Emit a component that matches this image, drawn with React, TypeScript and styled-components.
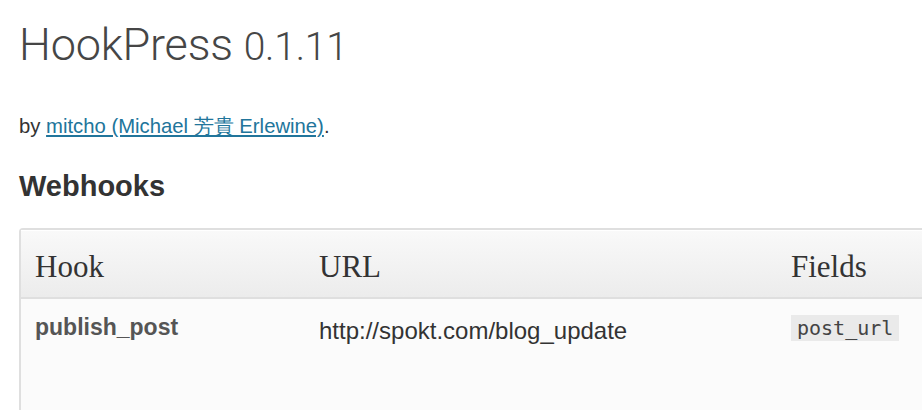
import React from "react";
import styled, { createGlobalStyle } from "styled-components";

const Global = createGlobalStyle`
  html, body { margin: 0; padding: 0; background: #ffffff; }
  body { font-family: "Liberation Sans", Arial, sans-serif; color: #333; }
`;

const Page = styled.div`
  padding: 15px 0 0 19px;
  overflow: hidden;
  height: 410px;
  box-sizing: border-box;
`;

const Title = styled.h2`
  margin: 0;
  font-family: Roboto, "Liberation Sans", sans-serif;
  font-weight: 300;
  font-size: 45px;
  line-height: 60px;
  color: #464646;
  letter-spacing: -0.2px;
`;

const Version = styled.span`
  font-size: 39px;
`;

const Byline = styled.p`
  margin: 36px 0 0 0;
  font-size: 20.3px;
  line-height: 26px;
  color: #333;
`;

const AuthorLink = styled.a`
  color: #21759b;
  text-decoration: underline;
  text-underline-offset: 2px;
`;

const SectionTitle = styled.h3`
  margin: 30px 0 0 0;
  font-size: 29px;
  line-height: 34px;
  font-weight: bold;
  color: #333;
`;

const Table = styled.table`
  margin-top: 25px;
  width: 1000px;
  border-collapse: separate;
  border-spacing: 0;
  border: 2px solid #dfdfdf;
  border-right: none;
  border-bottom: none;
  border-radius: 4px 0 0 0;
  background: #fbfbfb;
`;

const HeadCell = styled.th<{ $w?: number }>`
  text-align: left;
  font-family: "Liberation Serif", Georgia, serif;
  font-weight: normal;
  font-size: 31px;
  color: #333;
  height: 69px;
  padding: 6px 14px 0 14px;
  vertical-align: middle;
  background: linear-gradient(to bottom, #f9f9f9, #ececec);
  border-bottom: 2px solid #dfdfdf;
  width: ${(p) => (p.$w ? `${p.$w}px` : "auto")};
  box-sizing: border-box;
  border-top: 1px solid #ffffff;
`;

const Cell = styled.td<{ $bold?: boolean; $offset?: number }>`
  vertical-align: top;
  padding: ${(p) => 14 + (p.$offset ?? 0)}px 14px 0 14px;
  height: 130px;
  box-sizing: border-box;
  font-size: ${(p) => (p.$bold ? 23 : 24)}px;
  line-height: 28px;
  font-weight: ${(p) => (p.$bold ? "bold" : "normal")};
  color: ${(p) => (p.$bold ? "#555" : "#333")};
`;

const Code = styled.code`
  display: inline-block;
  font-family: "DejaVu Sans Mono", "Liberation Mono", monospace;
  font-size: 20px;
  line-height: 26px;
  padding: 0 6px;
  background: #eaeaea;
  color: #444;
`;

export default function App() {
  return (
    <>
      <Global />
      <Page>
        <Title>
          HookPress <Version>0.1.11</Version>
        </Title>
        <Byline>
          by <AuthorLink href="#">mitcho (Michael 芳貴 Erlewine)</AuthorLink>.
        </Byline>
        <SectionTitle>Webhooks</SectionTitle>
        <Table>
          <thead>
            <tr>
              <HeadCell $w={284}>Hook</HeadCell>
              <HeadCell $w={472}>URL</HeadCell>
              <HeadCell>Fields</HeadCell>
            </tr>
          </thead>
          <tbody>
            <tr>
              <Cell $bold>publish_post</Cell>
              <Cell $offset={4}>http://spokt.com/blog_update</Cell>
              <Cell>
                <Code>post_url</Code>
              </Cell>
            </tr>
          </tbody>
        </Table>
      </Page>
    </>
  );
}
